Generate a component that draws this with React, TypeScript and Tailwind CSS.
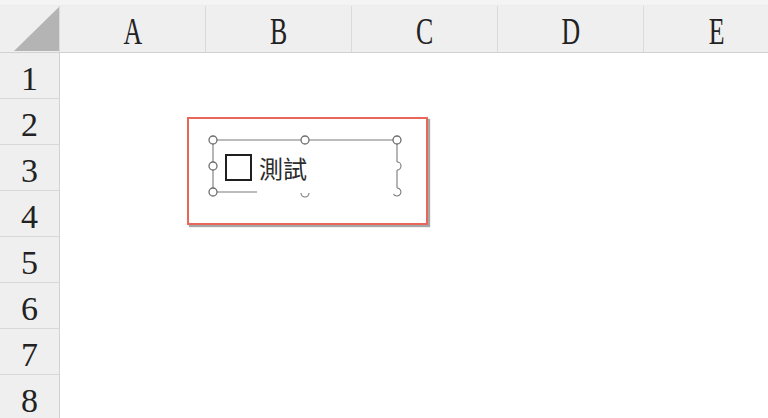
import React from 'react'

const columns = ['A', 'B', 'C', 'D', 'E']
const rows = [1, 2, 3, 4, 5, 6, 7, 8]

const FormControl = () => (
  <div className="absolute left-[187px] top-[117px] w-[241px] h-[108px] border-2 border-[#e8665a] bg-white shadow-[2px_2px_1px_rgba(0,0,0,0.35)]">
    <svg className="absolute -left-[2px] -top-[2px]" width="241" height="108" viewBox="0 0 241 108">
      <g fill="none" stroke="#7a7a7a" strokeWidth="1.1">
        <line x1="26" y1="23" x2="210" y2="23" />
        <line x1="26" y1="23" x2="26" y2="75" />
        <line x1="26" y1="75" x2="70" y2="75" />
        <line x1="210" y1="23" x2="210" y2="45" />
        <line x1="210" y1="53" x2="210" y2="71" />
        {/* broken handles on the right and bottom edge */}
        <path d="M210 45 A4 4 0 0 1 210 53" />
        <path d="M210 71 A4 4 0 1 1 206.5 77" />
        <path d="M114 76 A4 4 0 0 0 122 76" />
      </g>
      <g fill="#fff" stroke="#6e6e6e" strokeWidth="1.3">
        <circle cx="26" cy="23" r="4" />
        <circle cx="118" cy="23" r="4" />
        <circle cx="210" cy="23" r="4" />
        <circle cx="26" cy="49" r="4" />
        <circle cx="26" cy="75" r="4" />
      </g>
    </svg>
    <div className="absolute left-[36px] top-[35px] flex items-center gap-[7px]">
      <div className="w-[27px] h-[27px] border-[2.5px] border-[#1f1f1f] bg-white" />
      <span className="text-[24px] leading-none text-[#2b2b2b] font-['Noto_Sans_CJK_TC','Noto_Sans_CJK_SC',sans-serif]">
        測試
      </span>
    </div>
  </div>
)

export default function App() {
  return (
    <div className="relative w-[768px] h-[418px] overflow-hidden bg-white font-['Liberation_Serif',serif] text-[#222]">
      <div className="h-[6px] bg-[#f4f4f4] border-b border-[#ececec]" />
      <div className="flex h-[47px] bg-[#efefef] border-b border-[#d2d2d2]">
        <div className="w-[60px] shrink-0 flex items-end justify-end pb-[1px] border-r border-[#dadada]">
          <svg width="45" height="44" viewBox="0 0 45 44">
            <polygon points="45,0 45,44 0,44" fill="#b4b4b4" />
          </svg>
        </div>
        {columns.map((c) => (
          <div
            key={c}
            className="w-[146px] shrink-0 flex items-center justify-center border-r border-[#dadada]"
          >
            <span className="inline-block text-[38px] leading-none scale-x-[0.68] pt-[4px]">{c}</span>
          </div>
        ))}
      </div>
      <div className="flex">
        <div className="w-[60px] shrink-0 bg-[#efefef] border-r border-[#d2d2d2]">
          {rows.map((r) => (
            <div
              key={r}
              className="h-[46px] flex items-center justify-center border-b border-[#d8d8d8] text-[34px] leading-none pt-[6px]"
            >
              {r}
            </div>
          ))}
        </div>
        <div className="flex-1 bg-white" />
      </div>
      <FormControl />
    </div>
  )
}
